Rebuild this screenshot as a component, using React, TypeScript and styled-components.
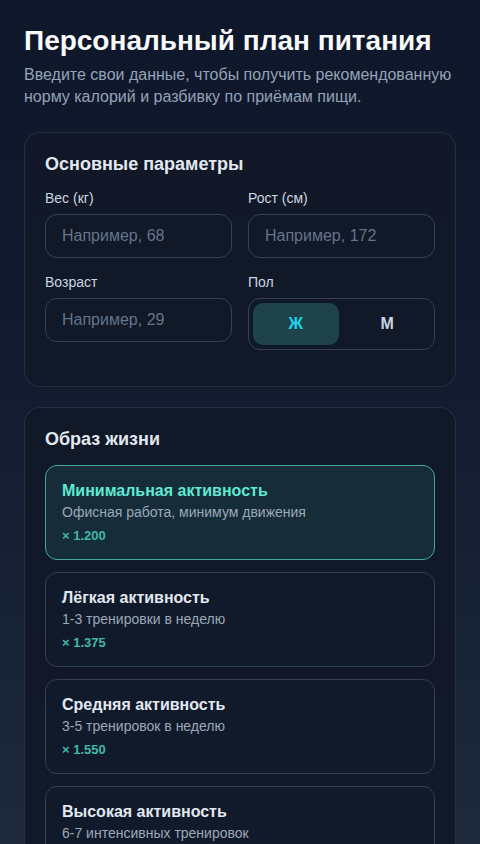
import React, { useState } from "react";
import styled, { createGlobalStyle } from "styled-components";

const GlobalStyle = createGlobalStyle`
  * { box-sizing: border-box; }
  html, body { margin: 0; padding: 0; }
  body {
    font-family: "Liberation Sans", Arial, sans-serif;
    background: #0f172a;
    color: #e2e8f0;
  }
`;

const Page = styled.div`
  min-height: 100vh;
  background: linear-gradient(180deg, #0f172a 0%, #111a2e 40%, #1e293b 100%);
  background-attachment: fixed;
  padding: 24px 24px 40px;
  display: flex;
  flex-direction: column;
  gap: 20px;
`;

const Header = styled.header`
  display: flex;
  flex-direction: column;
  gap: 6px;
  margin-bottom: 4px;
`;

const Title = styled.h1`
  margin: 0;
  font-size: 28px;
  line-height: 1.2;
  font-weight: 700;
  color: #f8fafc;
`;

const Subtitle = styled.p`
  margin: 0;
  font-size: 16px;
  line-height: 22px;
  color: #94a3b8;
`;

const Card = styled.section`
  background: rgba(17, 24, 39, 0.92);
  border: 1px solid rgba(94, 160, 170, 0.18);
  border-radius: 16px;
  padding: 20px;
`;

const CardTitle = styled.h2`
  margin: 0 0 14px;
  font-size: 18px;
  line-height: 23px;
  font-weight: 700;
  color: #e2e8f0;
`;

const Grid = styled.div`
  display: grid;
  grid-template-columns: 1fr 1fr;
  column-gap: 16px;
  row-gap: 16px;
  margin-bottom: 16px;
`;

const Field = styled.label`
  display: flex;
  flex-direction: column;
  gap: 7px;
`;

const Label = styled.span`
  font-size: 14px;
  line-height: 17px;
  color: #cbd5e1;
`;

const Input = styled.input`
  height: 44px;
  width: 100%;
  border: 1px solid #364357;
  border-radius: 12px;
  background: #111827;
  padding: 0 16px;
  font-family: "Liberation Sans", Arial, sans-serif;
  font-size: 16px;
  color: #e2e8f0;
  outline: none;
  &::placeholder { color: #64748b; }
`;

const Toggle = styled.div`
  height: 52px;
  border: 1px solid #364357;
  border-radius: 12px;
  padding: 4px;
  display: grid;
  grid-template-columns: 1fr 1fr;
  gap: 6px;
  background: #111827;
`;

const ToggleButton = styled.button<{ $active: boolean }>`
  border: none;
  border-radius: 10px;
  background: ${(p) => (p.$active ? "#1f434a" : "transparent")};
  color: ${(p) => (p.$active ? "#22d3ee" : "#cbd5e1")};
  font-family: "Liberation Sans", Arial, sans-serif;
  font-size: 16px;
  font-weight: 700;
  cursor: pointer;
`;

const Options = styled.div`
  display: flex;
  flex-direction: column;
  gap: 12px;
`;

const Option = styled.button<{ $active: boolean }>`
  text-align: left;
  display: flex;
  flex-direction: column;
  padding: 15px 16px 15px;
  border-radius: 12px;
  border: 1px solid ${(p) => (p.$active ? "#3fa89d" : "#334155")};
  background: ${(p) => (p.$active ? "#162c38" : "#111a2b")};
  font-family: "Liberation Sans", Arial, sans-serif;
  cursor: pointer;
`;

const OptionTitle = styled.span<{ $active: boolean }>`
  font-size: 16px;
  line-height: 20px;
  font-weight: 700;
  color: ${(p) => (p.$active ? "#5eead4" : "#e2e8f0")};
`;

const OptionDesc = styled.span`
  margin-top: 2px;
  font-size: 14px;
  line-height: 18px;
  color: #9ca8b8;
`;

const OptionFactor = styled.span`
  margin-top: 7px;
  font-size: 13px;
  line-height: 16px;
  font-weight: 700;
  color: #3fb8a8;
`;

const levels = [
  { title: "Минимальная активность", desc: "Офисная работа, минимум движения", factor: "1.200" },
  { title: "Лёгкая активность", desc: "1-3 тренировки в неделю", factor: "1.375" },
  { title: "Средняя активность", desc: "3-5 тренировок в неделю", factor: "1.550" },
  { title: "Высокая активность", desc: "6-7 интенсивных тренировок", factor: "1.725" },
  { title: "Очень высокая активность", desc: "Физическая работа и спорт", factor: "1.900" },
];

export default function App() {
  const [sex, setSex] = useState<"f" | "m">("f");
  const [level, setLevel] = useState(0);
  return (
    <>
      <GlobalStyle />
      <Page>
        <Header>
          <Title>Персональный план питания</Title>
          <Subtitle>
            Введите свои данные, чтобы получить рекомендованную норму калорий и разбивку по приёмам пищи.
          </Subtitle>
        </Header>

        <Card>
          <CardTitle>Основные параметры</CardTitle>
          <Grid>
            <Field>
              <Label>Вес (кг)</Label>
              <Input placeholder="Например, 68" />
            </Field>
            <Field>
              <Label>Рост (см)</Label>
              <Input placeholder="Например, 172" />
            </Field>
            <Field>
              <Label>Возраст</Label>
              <Input placeholder="Например, 29" />
            </Field>
            <Field as="div">
              <Label>Пол</Label>
              <Toggle>
                <ToggleButton $active={sex === "f"} onClick={() => setSex("f")}>Ж</ToggleButton>
                <ToggleButton $active={sex === "m"} onClick={() => setSex("m")}>М</ToggleButton>
              </Toggle>
            </Field>
          </Grid>
        </Card>

        <Card>
          <CardTitle>Образ жизни</CardTitle>
          <Options>
            {levels.map((l, i) => (
              <Option key={l.title} $active={i === level} onClick={() => setLevel(i)}>
                <OptionTitle $active={i === level}>{l.title}</OptionTitle>
                <OptionDesc>{l.desc}</OptionDesc>
                <OptionFactor>× {l.factor}</OptionFactor>
              </Option>
            ))}
          </Options>
        </Card>
      </Page>
    </>
  );
}
